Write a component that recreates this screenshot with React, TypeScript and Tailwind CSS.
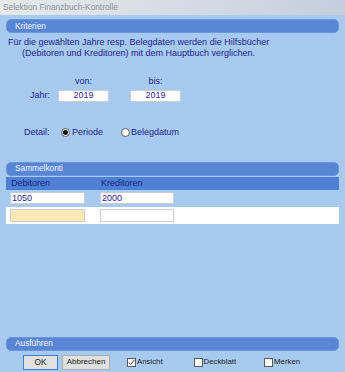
import React from 'react';

const font = { fontFamily: '"Liberation Sans", Arial, sans-serif' };

const SectionHeader = ({ title }: { title: string }) => (
  <div className="mx-[6px] h-[14px] rounded-[5px] bg-[#5985d5] border border-[#6c95dc] flex items-center pl-[8px] text-[8.3px] text-[#f2f6fc] leading-none">
    {title}
  </div>
);

const Field = ({ value, className = '', align = 'center' }: { value?: string; className?: string; align?: 'center' | 'left' }) => (
  <div
    className={`h-[12px] border border-[#c9ccd2] flex items-center text-[9px] leading-none text-[#2b239a] ${align === 'center' ? 'justify-center' : 'justify-start pl-[1px]'} ${className}`}
  >
    {value}
  </div>
);

const Radio = ({ checked }: { checked?: boolean }) => (
  <div className="w-[9px] h-[9px] rounded-full border border-[#5c5c5c] bg-white flex items-center justify-center">
    {checked && <div className="w-[5px] h-[5px] rounded-full bg-[#111]" />}
  </div>
);

const Check = ({ checked }: { checked?: boolean }) => (
  <div className="w-[9px] h-[9px] border border-[#5a5a5a] bg-white flex items-center justify-center">
    {checked && (
      <svg width="7" height="7" viewBox="0 0 7 7">
        <path d="M0.8 3.6 L2.7 5.6 L6.4 0.9" fill="none" stroke="#333" strokeWidth="1" />
      </svg>
    )}
  </div>
);

export default function App() {
  return (
    <div className="w-[345px] h-[372px] bg-[#a7caf1] overflow-hidden flex flex-col" style={font}>
      <div className="h-[15px] bg-linear-to-r from-[#e7e9ec] to-[#c4cfdd] flex items-center pl-[3px] text-[8.3px] text-[#8d929a] leading-none">
        Selektion Finanzbuch-Kontrolle
      </div>

      <div className="mt-[4px]">
        <SectionHeader title="Kriterien" />
      </div>

      <div className="mt-[4px] text-[9px] leading-[11px] text-[#23238c]">
        <div className="pl-[8px]">Für die gewählten Jahre resp. Belegdaten werden die Hilfsbücher</div>
        <div className="pl-[22px]">(Debitoren und Kreditoren) mit dem Hauptbuch verglichen.</div>
      </div>

      <div className="mt-[17px] flex pl-[58px] gap-[21px] text-[9px] leading-[11px] text-[#23238c]">
        <div className="w-[51px] text-center">von:</div>
        <div className="w-[51px] text-center">bis:</div>
      </div>

      <div className="mt-[2px] flex items-center pl-[30px] text-[9px] text-[#23238c]">
        <span className="w-[28px]">Jahr:</span>
        <Field value="2019" className="w-[51px] bg-white" />
        <Field value="2019" className="w-[51px] ml-[21px] bg-white" />
      </div>

      <div className="mt-[24px] flex items-center pl-[24px] text-[9px] leading-[11px] text-[#23238c]">
        <span className="w-[37px]">Detail:</span>
        <Radio checked />
        <span className="ml-[2px]">Periode</span>
        <div className="ml-[18px]"><Radio /></div>
        <span className="ml-[1px]">Belegdatum</span>
      </div>

      <div className="mt-[24px]">
        <SectionHeader title="Sammelkonti" />
      </div>
      <div className="mx-[6px] mt-[1px] h-[13px] bg-[#5080d6] flex items-center text-[9px] text-[#17257f] leading-none">
        <span className="pl-[5px] w-[95px]">Debitoren</span>
        <span>Kreditoren</span>
      </div>
      <div className="mx-[6px] h-[17px] flex items-center gap-[15px] pl-[4px]">
        <Field value="1050" align="left" className="w-[75px] bg-white" />
        <Field value="2000" align="left" className="w-[74px] bg-white" />
      </div>
      <div className="mx-[6px] h-[17px] bg-white flex items-center gap-[15px] pl-[4px]">
        <Field className="w-[75px] bg-[#fde8b4] h-[13px]" />
        <Field className="w-[74px] bg-white h-[13px]" />
      </div>

      <div className="mt-[113px]">
        <SectionHeader title="Ausführen" />
      </div>

      <div className="mt-[4px] flex items-center pl-[23px] text-[7.8px] text-[#1d1d1d] leading-none">
        <button className="w-[35px] h-[15px] border border-[#3d7fd1] bg-[#e1e1e1] flex items-center justify-center text-[8.3px]">OK</button>
        <button className="ml-[4px] w-[48px] h-[15px] border border-[#adadad] bg-[#e1e1e1] flex items-center justify-center text-[8px]">Abbrechen</button>
        <div className="ml-[17px] flex items-center">
          <Check checked />
          <span className="ml-[1px]">Ansicht</span>
        </div>
        <div className="ml-[31px] flex items-center">
          <Check />
          <span className="ml-[1px]">Deckblatt</span>
        </div>
        <div className="ml-[28px] flex items-center">
          <Check />
          <span className="ml-[1px]">Merken</span>
        </div>
      </div>
    </div>
  );
}
